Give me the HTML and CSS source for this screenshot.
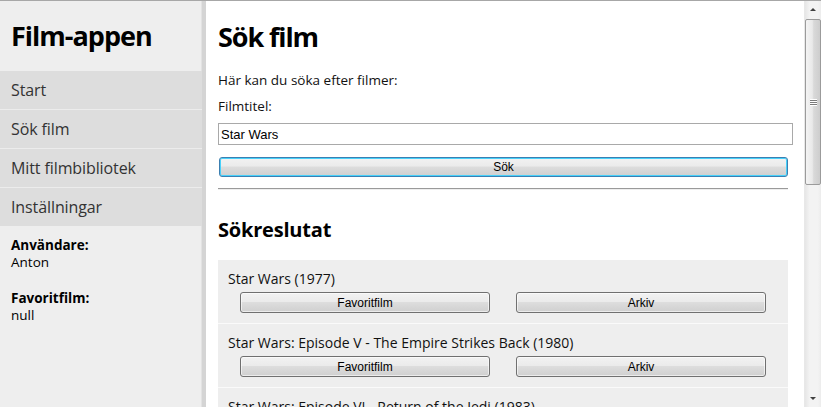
FILE: index.html
```html
<!DOCTYPE html>
<html lang="sv">
<head>
<meta charset="utf-8">
<title>Film-appen</title>
<link rel="stylesheet" href="styles.css">
</head>
<body>
<div class="app">
  <aside class="sidebar">
    <div class="brand">Film-appen</div>
    <nav class="nav">
      <a class="nav-item">Start</a>
      <a class="nav-item">Sök film</a>
      <a class="nav-item">Mitt filmbibliotek</a>
      <a class="nav-item">Inställningar</a>
    </nav>
    <div class="info">
      <div class="info-block"><b>Användare:</b><br>Anton</div>
      <div class="info-block"><b>Favoritfilm:</b><br>null</div>
    </div>
  </aside>
  <main class="main">
    <h1 class="title">Sök film</h1>
    <p class="line">Här kan du söka efter filmer:</p>
    <p class="line">Filmtitel:</p>
    <input class="field" type="text" value="Star Wars">
    <button class="btn btn-primary">Sök</button>
    <hr class="rule">
    <h2 class="subtitle">Sökreslutat</h2>
    <div class="results">
      <div class="result">
        <div class="result-title">Star Wars (1977)</div>
        <div class="result-actions"><button class="btn">Favoritfilm</button><button class="btn">Arkiv</button></div>
      </div>
      <div class="result">
        <div class="result-title">Star Wars: Episode V - The Empire Strikes Back (1980)</div>
        <div class="result-actions"><button class="btn">Favoritfilm</button><button class="btn">Arkiv</button></div>
      </div>
      <div class="result">
        <div class="result-title">Star Wars: Episode VI - Return of the Jedi (1983)</div>
        <div class="result-actions"><button class="btn">Favoritfilm</button><button class="btn">Arkiv</button></div>
      </div>
    </div>
  </main>
  <div class="scrollbar">
    <div class="sb-arrow sb-up"><span class="tri-up"></span></div>
    <div class="sb-thumb"><span class="grip"></span></div>
    <div class="sb-track"></div>
    <div class="sb-arrow sb-down"><span class="tri-down"></span></div>
  </div>
</div>
</body>
</html>
```
FILE: styles.css
```css
html, body {
  margin: 0;
  padding: 0;
  height: 100%;
  overflow: hidden;
  background: #fff;
}
body {
  font-family: "Open Sans", "Noto Sans", sans-serif;
  color: #111;
}
.app {
  display: flex;
  height: 406px;
  border-top: 1px solid #a7a7a7;
}
.sidebar {
  width: 202px;
  flex: none;
  background: #eeeeee;
  border-right: 4px solid #d4d4d4;
  box-shadow: inset -1px 0 0 #e2e2e2;
}
.brand {
  height: 70px;
  box-sizing: border-box;
  padding: 16px 0 0 11px;
  font-size: 27px;
  font-weight: 700;
  line-height: 38px;
  color: #000;
  letter-spacing: -1px;
}
.nav {
  display: flex;
  flex-direction: column;
}
.nav-item {
  display: block;
  height: 38px;
  line-height: 38px;
  padding-left: 11px;
  background: #dddddd;
  border-bottom: 1px solid #ececec;
  font-size: 16px;
  color: #333;
  letter-spacing: -0.1px;
}
.nav-item:last-child {
  border-bottom: none;
}
.info {
  padding: 11px 0 0 11px;
  font-size: 13.5px;
  line-height: 17px;
  color: #000;
}
.info-block {
  margin-bottom: 19px;
}
.main {
  flex: 1;
  padding: 0 17px 0 12px;
  min-width: 0;
}
.title {
  margin: 16px 0 0;
  font-size: 27px;
  line-height: 40px;
  font-weight: 700;
  color: #000;
  letter-spacing: -1.1px;
}
.line {
  margin: 0;
  font-size: 13.5px;
  line-height: 26px;
  color: #111;
}
.line:first-of-type {
  margin-top: 10px;
}
.field {
  display: block;
  box-sizing: border-box;
  width: 575px;
  height: 22px;
  margin: 4px 0 0;
  padding: 1px 2px;
  border: 1px solid #a9a9a9;
  font-family: "Liberation Sans", Arial, sans-serif;
  font-size: 13px;
  color: #000;
  background: #fff;
}
.btn {
  display: block;
  box-sizing: border-box;
  height: 21px;
  padding: 0;
  border: 1px solid #707070;
  border-radius: 3px;
  background: linear-gradient(#f2f2f2 0%, #ebebeb 45%, #dddddd 50%, #cfcfcf 100%);
  font-family: "Liberation Sans", Arial, sans-serif;
  font-size: 12px;
  color: #000;
  box-shadow: inset 0 0 0 1px rgba(255,255,255,0.6);
}
.btn-primary {
  width: 569px;
  height: 20px;
  margin: 12px 0 0 1px;
  border-color: #3c7fb1;
  box-shadow: inset 0 0 0 1px #48d1fa;
}
.rule {
  margin: 11px 0 0;
  width: 570px;
  border: none;
  border-top: 1px solid #9a9a9a;
  border-bottom: 1px solid #eeeeee;
  height: 0;
}
.subtitle {
  margin: 25px 0 0;
  font-size: 20px;
  line-height: 30px;
  font-weight: 700;
  color: #000;
  letter-spacing: -0.2px;
}
.results {
  margin-top: 15px;
  width: 570px;
}
.result {
  background: #eeeeee;
  padding: 9px 22px 10px;
  border-bottom: 1px solid #fafafa;
}
.result-title {
  margin-left: -12px;
  font-size: 14px;
  line-height: 20px;
  margin-bottom: 3px;
  color: #111;
}
.result-actions {
  display: grid;
  grid-template-columns: 1fr 1fr;
  column-gap: 26px;
}
.result-actions .btn {
  width: 100%;
}
.scrollbar {
  width: 16px;
  flex: none;
  display: flex;
  flex-direction: column;
  background: linear-gradient(to right, #e6e6e6, #f3f3f3 30%, #f3f3f3 80%, #ececec);
  border-left: 1px solid #e8e8e8;
}
.sb-arrow {
  height: 17px;
  flex: none;
  display: flex;
  align-items: center;
  justify-content: center;
}
.tri-up {
  width: 0;
  height: 0;
  border-left: 3px solid transparent;
  border-right: 3px solid transparent;
  border-bottom: 3px solid #404040;
}
.tri-down {
  width: 0;
  height: 0;
  border-left: 3px solid transparent;
  border-right: 3px solid transparent;
  border-top: 3px solid #404040;
}
.sb-thumb {
  height: 166px;
  flex: none;
  margin: 1px 0 0;
  box-sizing: border-box;
  border: 1px solid #9b9b9b;
  border-radius: 2px;
  background: linear-gradient(to right, #f4f4f4, #e9e9e9 45%, #d9d9d9 55%, #cdcdcd);
  display: flex;
  align-items: center;
  justify-content: center;
}
.grip {
  width: 7px;
  height: 7px;
  background: repeating-linear-gradient(#fefefe 0 1px, #7a7a7a 1px 2px);
}
.sb-track {
  flex: 1;
}
```
